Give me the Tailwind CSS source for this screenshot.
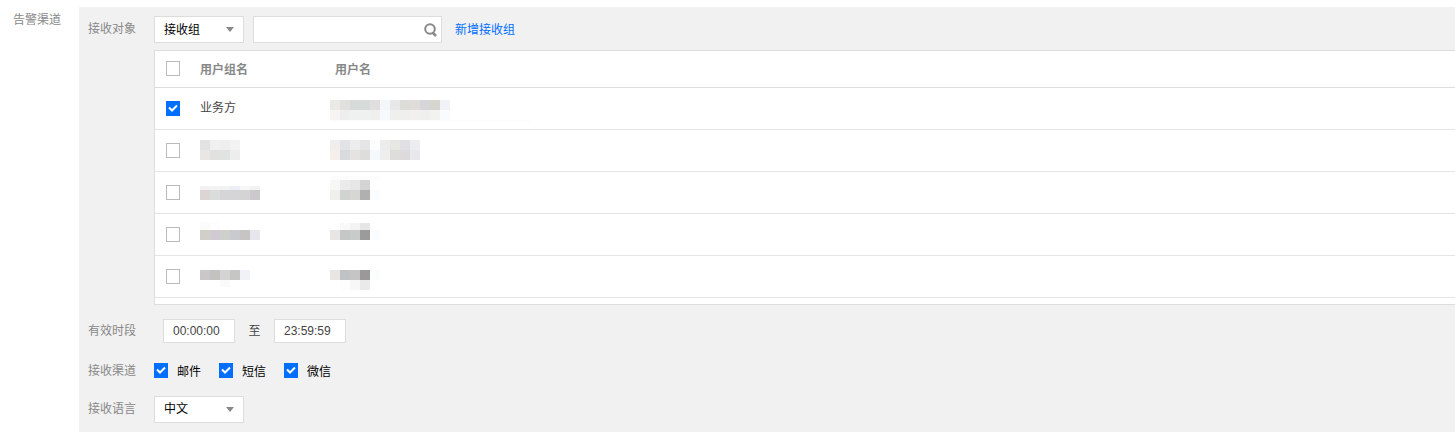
<!DOCTYPE html>
<html lang="zh-CN">
<head>
  <meta charset="UTF-8" />
  <meta name="viewport" content="width=device-width, initial-scale=1.0" />
  <title>告警渠道</title>
  <script src="https://cdn.jsdelivr.net/npm/@tailwindcss/browser@4"></script>
</head>
<body class="flex bg-white pt-[7px] font-['Liberation_Sans','Noto_Sans_CJK_SC',sans-serif] text-xs text-[#888]">

  <h2 class="w-[79px] shrink-0 pl-[13px] pt-[5px]">告警渠道</h2>

  <form class="min-w-0 grow self-start bg-[#f1f1f1] pl-[9px] py-[9px]">

    <!-- 接收对象 -->
    <div class="flex">
      <label for="target" class="w-[66px] shrink-0 pt-[5px]">接收对象</label>
      <div class="min-w-0 grow">
        <div class="flex items-center">
          <div class="grid items-center">
            <select id="target" class="col-start-1 row-start-1 h-[27px] w-[90px] appearance-none border border-[#ddd] bg-white pl-[9px] text-black">
              <option>接收组</option>
            </select>
            <svg class="pointer-events-none col-start-1 row-start-1 mr-[9px] justify-self-end" width="9" height="5" viewBox="0 0 9 5"><path d="M0 0h8L4 5z" fill="#888" /></svg>
          </div>
          <div class="ml-[9px] grid items-center">
            <input type="text" aria-label="搜索" class="col-start-1 row-start-1 h-[27px] w-[189px] border border-[#ddd] bg-white pl-[9px] pr-6 text-black" />
            <button type="button" aria-label="搜索" class="col-start-1 row-start-1 mr-[5px] justify-self-end">
              <svg width="13" height="14" viewBox="0 0 13 14" fill="none" stroke="#888" stroke-width="2"><circle cx="6" cy="6" r="4.800" /><path d="M8.500 9.500l3.500 3.500" stroke-width="2.500" /></svg>
            </button>
          </div>
          <a href="#" class="ml-[13px] pt-px text-[#006eff]">新增接收组</a>
        </div>

        <div class="mt-[7px] border-y border-l border-[#ddd] bg-white pb-1.5">
          <table class="w-full table-fixed border-collapse text-left">
            <colgroup><col class="w-[45px]" /><col class="w-[130px]" /><col /></colgroup>
            <thead>
              <tr class="h-9 border-b border-[#ddd]">
                <th class="p-0 pl-[11px]"><input type="checkbox" aria-label="全选" class="block h-[15px] w-[14px] appearance-none border border-[#bbb] bg-white" /></th>
                <th class="p-0 pt-0.5 font-bold">用户组名</th>
                <th class="p-0 pt-0.5 pl-[5px] font-bold">用户名</th>
              </tr>
            </thead>
            <tbody>
              <tr class="h-[42px] border-b border-[#e5e5e5]">
                <td class="p-0 pl-[11px]">
                  <span class="grid w-[14px] place-items-center">
                    <input id="g1" type="checkbox" checked class="col-start-1 row-start-1 h-[15px] w-[14px] appearance-none bg-[#006eff]" />
                    <svg class="pointer-events-none col-start-1 row-start-1" width="10" height="8" viewBox="0 0 10 8" fill="none" stroke="#fff" stroke-width="2"><path d="M1 3.500l3 3L9 1.500" /></svg>
                  </span>
                </td>
                <td class="p-0 text-[#444]"><label for="g1">业务方</label></td>
                <td class="p-0"><svg class="block" width="210" height="41" data-blocks="12,10,e9e9e6 e2dfdf d6dad8 d6dad8 e1dedf f3f7f9 e8e8e8 dcdcd9 dfdcda d6d6da d6d5ce f0f2f8;22,10,f6f5f3 eeeeef eff0f0 eff0f0 efefed f7fafc efefed efefee f1f0ee efeff0 f2f2ef fafbff;32,2,fcfcfc fcfcfc fcfcfc fcfcfc fcfcfc fcfcfc fcfcfc fcfcfc fcfcfc fcfcfc fcfcfc fcfcfc fcfcfc fcfcfc fcfcfc fcfcfc fcfcfc fcfcfc fcfcfc fcfcfc"></svg></td>
              </tr>
              <tr class="h-[42px] border-b border-[#e5e5e5]">
                <td class="p-0 pl-[11px]"><input type="checkbox" aria-label="选择" class="block h-[15px] w-[14px] appearance-none border border-[#bbb] bg-white" /></td>
                <td class="p-0"><svg class="block" width="120" height="41" data-blocks="10,10,e3e2e3 f0f0f0 f0efef f3f3f3;20,10,e8e7e5 e1e1e0 e1e3e2 ededed"></svg></td>
                <td class="p-0"><svg class="block" width="210" height="41" data-blocks="10,10,f0eeed e2e3e6 ececee e5e5e5 fcfefe ececec e6e6e2 e0dfe2 ecedf0;20,10,f4efeb d8dadd e5e3e1 dddedc f6f9fb eeeeee dedddb dddadb e7e8eb"></svg></td>
              </tr>
              <tr class="h-[42px] border-b border-[#e5e5e5]">
                <td class="p-0 pl-[11px]"><input type="checkbox" aria-label="选择" class="block h-[15px] w-[14px] appearance-none border border-[#bbb] bg-white" /></td>
                <td class="p-0"><svg class="block" width="120" height="41" data-blocks="14,4,f2f1f1 f2f2f2 f2f2f2 ebeef2 f6f8f8 f2f2f2;18,10,dbd5d3 d9dddc d5d5d8 d5d5d8 d3d4d3 cbc9cc"></svg></td>
                <td class="p-0"><svg class="block" width="210" height="41" data-blocks="4,4,fcfcfc fcfcfc fcfcfc fcfcfc fcfcfc;8,10,f7f8f6 ebebeb e6e6e6 d3d4d3;18,10,efefed d1d3d2 d6d6d5 b0b0b0 fbfcff"></svg></td>
              </tr>
              <tr class="h-[42px] border-b border-[#e5e5e5]">
                <td class="p-0 pl-[11px]"><input type="checkbox" aria-label="选择" class="block h-[15px] w-[14px] appearance-none border border-[#bbb] bg-white" /></td>
                <td class="p-0"><svg class="block" width="120" height="41" data-blocks="8,8,fbfbfb fdfdfd;16,10,d0cfca d0cbd1 cfcfcb c8cacd c6c5c4 e6e7ea"></svg></td>
                <td class="p-0"><svg class="block" width="210" height="41" data-blocks="9,7,ffffff f9f9f9 f3f3f3 e6e6e6;16,10,e7e6e5 c4c7c6 c9cbca 9b9b9b fbfcff"></svg></td>
              </tr>
              <tr class="h-[42px] border-b border-[#e5e5e5]">
                <td class="p-0 pl-[11px]"><input type="checkbox" aria-label="选择" class="block h-[15px] w-[14px] appearance-none border border-[#bbb] bg-white" /></td>
                <td class="p-0"><svg class="block" width="120" height="41" data-blocks="14,10,c9c7c8 c3c2c1 d5d4d5 c6c6c5 f1f2f8;24,7,ffffff ffffff fafafa"></svg></td>
                <td class="p-0"><svg class="block" width="210" height="41" data-blocks="14,10,e7e6e5 c1c2c3 c6c5c6 9a9898 fbfdfd;24,10,ffffff fdfdfd f7f7f7 eaeaea"></svg></td>
              </tr>
            </tbody>
          </table>
        </div>
      </div>
    </div>

    <!-- 有效时段 -->
    <div class="mt-[14px] flex items-center">
      <label for="start" class="w-[75px] pt-px">有效时段</label>
      <input id="start" type="text" value="00:00:00" class="h-6 w-[72px] border border-[#ddd] bg-white pl-[9px] text-[#444]" />
      <label for="end" class="w-[39px] text-center text-[#444]">至</label>
      <input id="end" type="text" value="23:59:59" class="h-6 w-[72px] border border-[#ddd] bg-white pl-[9px] text-[#444]" />
    </div>

    <!-- 接收渠道 -->
    <div class="mt-5 flex items-start leading-[18px] text-black">
      <span class="w-[66px] leading-4 text-[#888]">接收渠道</span>
      <label class="mr-[18px] flex items-start gap-[9px]">
        <span class="grid place-items-center">
          <input type="checkbox" checked class="col-start-1 row-start-1 h-[15px] w-[14px] appearance-none bg-[#006eff]" />
          <svg class="pointer-events-none col-start-1 row-start-1" width="10" height="8" viewBox="0 0 10 8" fill="none" stroke="#fff" stroke-width="2"><path d="M1 3.500l3 3L9 1.500" /></svg>
        </span>
        邮件
      </label>
      <label class="mr-[18px] flex items-start gap-[9px]">
        <span class="grid place-items-center">
          <input type="checkbox" checked class="col-start-1 row-start-1 h-[15px] w-[14px] appearance-none bg-[#006eff]" />
          <svg class="pointer-events-none col-start-1 row-start-1" width="10" height="8" viewBox="0 0 10 8" fill="none" stroke="#fff" stroke-width="2"><path d="M1 3.500l3 3L9 1.500" /></svg>
        </span>
        短信
      </label>
      <label class="flex items-start gap-[9px]">
        <span class="grid place-items-center">
          <input type="checkbox" checked class="col-start-1 row-start-1 h-[15px] w-[14px] appearance-none bg-[#006eff]" />
          <svg class="pointer-events-none col-start-1 row-start-1" width="10" height="8" viewBox="0 0 10 8" fill="none" stroke="#fff" stroke-width="2"><path d="M1 3.500l3 3L9 1.500" /></svg>
        </span>
        微信
      </label>
    </div>

    <!-- 接收语言 -->
    <div class="mt-[15px] flex items-start">
      <label for="lang" class="w-[66px] pt-[5px]">接收语言</label>
      <div class="grid items-center">
        <select id="lang" class="col-start-1 row-start-1 h-[27px] w-[90px] appearance-none border border-[#ddd] bg-white pl-[9px] text-black">
          <option>中文</option>
        </select>
        <svg class="pointer-events-none col-start-1 row-start-1 mr-[9px] justify-self-end" width="9" height="5" viewBox="0 0 9 5"><path d="M0 0h8L4 5z" fill="#888" /></svg>
      </div>
    </div>
  </form>

  <script>
    // masked names: each line is "top,height,colors"
    document.querySelectorAll("svg[data-blocks]").forEach(svg => {
      svg.dataset.blocks.split(";").forEach(line => {
        const [y, h, colors] = line.split(",");
        colors.split(" ").forEach((color, i) => {
          const rect = document.createElementNS("http://www.w3.org/2000/svg", "rect");
          rect.setAttribute("x", i * 10);
          rect.setAttribute("y", y);
          rect.setAttribute("width", 10);
          rect.setAttribute("height", h);
          rect.setAttribute("fill", "#" + color);
          svg.appendChild(rect);
        });
      });
    });
  </script>
</body>
</html>
